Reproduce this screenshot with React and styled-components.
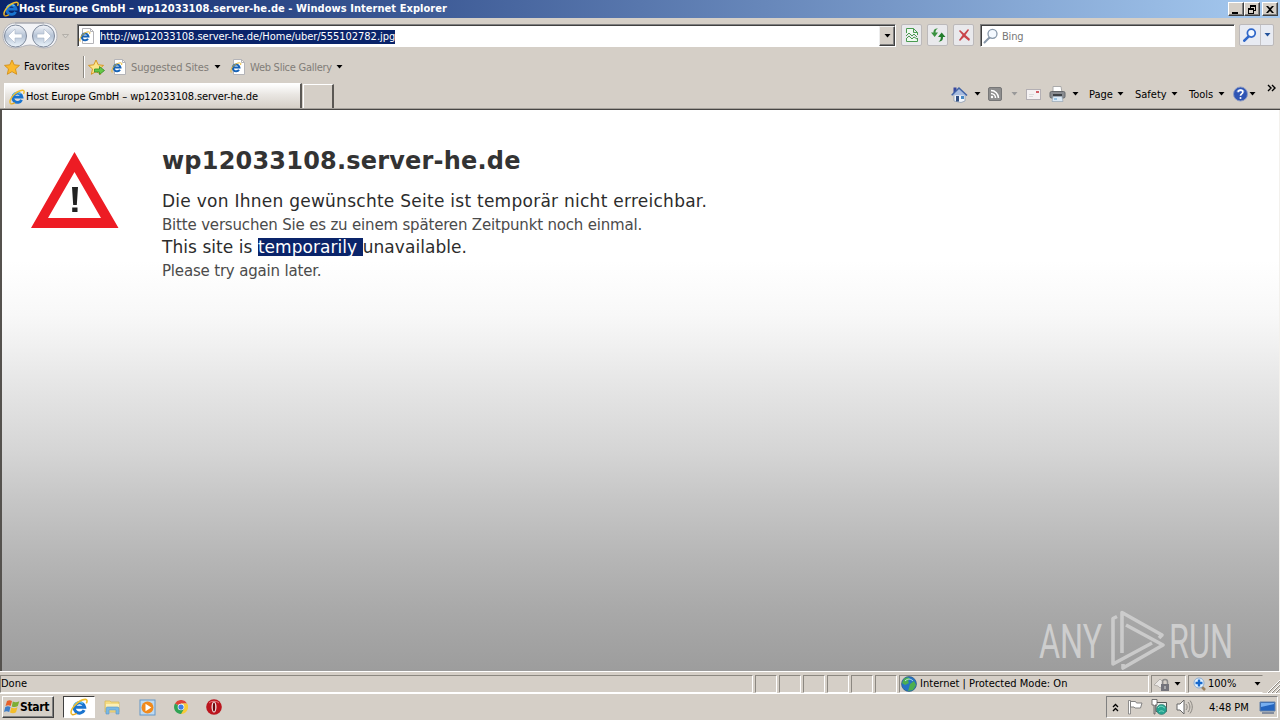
import React from "react"
import styled, { createGlobalStyle } from "styled-components"

const face = "#d5cfc7"
const ui = `"DejaVu Sans Condensed", "DejaVu Sans", Tahoma, sans-serif`

function App() {
  return (
    <Desktop>
      <GlobalStyle />
      <TitleBar>
        <IeLogo size={16} />
        <TitleText $ls={0.055}>
          Host Europe GmbH – wp12033108.server-he.de - Windows Internet Explorer
        </TitleText>
        <WindowButton>
          <path d="M3 9h6v2H3z" />
        </WindowButton>
        <WindowButton>
          <path d="M5 2h6v6H9V7h1V4H6v1H5zM3 5h6v6H3zM4 7v3h4V7z" fillRule="evenodd" />
        </WindowButton>
        <WindowButton gap>
          <path d="M3 3h2l2 2 2-2h2L8 6.500l3 3.500H9L7 8l-2 2H3l3-3.500z" />
        </WindowButton>
      </TitleBar>
      <NavRow>
        <NavArrows />
        <AddressBox>
          <PageIcon />
          <Url>http://wp12033108.server-he.de/Home/uber/555102782.jpg</Url>
          <ComboButton>
            <Arrow />
          </ComboButton>
        </AddressBox>
        <ToolButtons>
          <ToolButton>
            <svg width="14" height="16" viewBox="0 0 14 16" fill="none" stroke="#4a9b50">
              <path d="M1.500 6V1.500h7l4 4V8M8.500 1.500v4h4M1.500 11v3.500h11V11" fill="#effaf0" />
              <path d="M1 9l3-3 3 3 2-2 3 3M1 12l3-3 3 3 2-2 3 2" />
            </svg>
          </ToolButton>
          <ToolButton>
            <svg width="16" height="14" viewBox="0 0 16 14">
              <path d="M8 .5C4.500.5 3.500 2 3.500 4.500H1L4.700 9 8 4.500H5.500C5.500 2.500 6 1.500 8 .5z" fill="#3a9140" />
              <path d="M8.500 13.500c3.500 0 4.500-1.500 4.500-4.500h2.500L11.700 4.500 8 9h2.800c0 2-.5 3.500-2.300 4.500z" fill="#237d2c" />
            </svg>
          </ToolButton>
          <ToolButton>
            <svg width="14" height="14" viewBox="0 0 14 14">
              <path d="M2 3l1-1 4 3.500L11 1l1 1-3.500 5L13 11l-1 2-5-4-4 4-1-1 3.500-5z" fill="#c9444a" />
            </svg>
          </ToolButton>
        </ToolButtons>
        <SearchBox>
          <Magnifier color="#8898aa" />
          <Bing $color="#777" $ls={-0.2}>Bing</Bing>
        </SearchBox>
        <SearchSplit>
          <SearchCell $w={20}>
            <Magnifier color="#2f67c9" small />
          </SearchCell>
          <SearchCell $w={13}>
            <Arrow color="#24549c" />
          </SearchCell>
        </SearchSplit>
      </NavRow>
      <FavoritesRow>
        <Star />
        <FavLabel $w={59} $ls={0.1}>Favorites</FavLabel>
        <Divider />
        <Star add />
        <FavItem $ml={6}>
          <PageIcon />
          <Text $w={83} $color="#817d78" $ls={-0.15}>Suggested Sites</Text>
          <Arrow />
        </FavItem>
        <FavItem $ml={9}>
          <PageIcon />
          <Text $w={86} $color="#817d78" $ls={-0.26}>Web Slice Gallery</Text>
          <Arrow />
        </FavItem>
      </FavoritesRow>
      <TabRow>
        <Tab>
          <IeLogo size={16} />
          <TabText $ls={-0.09}>Host Europe GmbH – wp12033108.server-he.de</TabText>
        </Tab>
        <NewTab />
        <CommandBar>
          <CommandItem $w={37}>
            <HomeIcon />
            <Arrow />
          </CommandItem>
          <CommandItem $w={38}>
            <RssIcon />
            <Arrow color="#999" />
          </CommandItem>
          <CommandItem $w={23}>
            <MailIcon />
          </CommandItem>
          <CommandItem $w={40}>
            <PrinterIcon />
            <Arrow />
          </CommandItem>
          <CommandItem $w={46}>
            <Text $w={28}>Page</Text>
            <Arrow />
          </CommandItem>
          <CommandItem $w={54}>
            <Text $w={36}>Safety</Text>
            <Arrow />
          </CommandItem>
          <CommandItem $w={44}>
            <Text $w={29}>Tools</Text>
            <Arrow />
          </CommandItem>
          <CommandItem $w={34}>
            <HelpIcon />
            <Arrow />
          </CommandItem>
          <Chevrons width="9" height="8" viewBox="0 0 9 8">
            <path d="M1 1l3 3-3 3M5 1l3 3-3 3" fill="none" stroke="#000" strokeWidth="1.400" />
          </Chevrons>
        </CommandBar>
      </TabRow>
      <Page>
        <Warning />
        <Message>
          <Heading>wp12033108.server-he.de</Heading>
          <Strong $ls={0.26}>Die von Ihnen gewünschte Seite ist temporär nicht erreichbar.</Strong>
          <Line>Bitte versuchen Sie es zu einem späteren Zeitpunkt noch einmal.</Line>
          <Strong $ls={0.05}>
            This site is <Selected>temporarily </Selected>unavailable.
          </Strong>
          <Line>Please try again later.</Line>
        </Message>
        <Watermark />
      </Page>
      <StatusBar>
        <Panel $w={753}>
          <Text>Done</Text>
        </Panel>
        {[0, 1, 2, 3, 4, 5].map(i => (
          <Panel key={i} $w={22} />
        ))}
        <Panel $w={250}>
          <Globe />
          <Text $ls={0.02}>Internet | Protected Mode: On</Text>
        </Panel>
        <Panel $w={35}>
          <LockIcon />
          <Arrow />
        </Panel>
        <Panel $w={75} $open>
          <ZoomIcon />
          <ZoomText $w={43}>100%</ZoomText>
          <Arrow />
        </Panel>
        <Grip width="14" height="14" viewBox="0 0 14 14">
          <path d="M1 14L14 1M5 14l9-9M9 14l5-5" stroke="#fff" />
          <path d="M2 14L14 2M6 14l8-8M10 14l4-4" stroke="#8c8881" />
        </Grip>
      </StatusBar>
      <Taskbar>
        <StartButton>
          <WindowsFlag />
          <StartText>Start</StartText>
        </StartButton>
        <ActiveTask>
          <IeLogo size={18} />
        </ActiveTask>
        <Launchers>
          <FolderIcon />
          <PlayerIcon />
          <ChromeIcon />
          <OperaIcon />
        </Launchers>
        <Tray>
          <svg width="7" height="9" viewBox="0 0 7 9">
            <path d="M1 4l2.500-2.500L6 4M1 8l2.500-2.500L6 8" fill="none" stroke="#000" strokeWidth="1.300" />
          </svg>
          <TrayFlag />
          <NetworkIcon />
          <SpeakerIcon />
          <Clock>4:48 PM</Clock>
          <MonitorIcon />
        </Tray>
      </Taskbar>
    </Desktop>
  )
}

export default App

function Arrow({ color = "#000" }) {
  return (
    <svg width="7" height="4" viewBox="0 0 7 4">
      <path d="M.5 0h6l-3 3.500z" fill={color} />
    </svg>
  )
}

function WindowButton({ gap, children }) {
  return (
    <WinButton $gap={gap}>
      <svg width="14" height="12" viewBox="0 0 14 12">
        {children}
      </svg>
    </WinButton>
  )
}

function IeLogo({ size = 16 }) {
  return (
    <svg width={size} height={size} viewBox="0 0 16 16" fill="none">
      <path d="M12.600 10.800A4.600 4.600 0 1 1 13 8.200H5" stroke="#1a74cf" strokeWidth="2.800" />
      <path d="M3.800 6.500A4.800 4.800 0 0 1 11.500 4.800" stroke="#58bdf2" strokeWidth="1.600" />
      <path d="M1.500 14.500C-1 11 7 1.500 13.500 1.200c2-.1 2 1.800 1 3.600" stroke="#f0bd2c" strokeWidth="1.400" />
      <path d="M1.500 14.500c1 .9 3 0 4.500-.8" stroke="#e5a91c" strokeWidth="1.200" />
    </svg>
  )
}

function PageIcon() {
  return (
    <svg width="16" height="16" viewBox="0 0 16 16" fill="none">
      <path d="M3.500.5h8l3 3v12h-11z" fill="#fff" stroke="#b4b4b8" />
      <path d="M11.500.5v3h3" stroke="#b4b4b8" />
      <path d="M9 10.700A3.400 3.400 0 1 1 9.500 8.600H3.500" stroke="#1763b6" strokeWidth="2" />
      <path d="M1.200 13.500C-.5 10.500 4.500 4 9.500 3.800c1.500 0 1.500 1 1 2.200" stroke="#e8b52a" />
    </svg>
  )
}

function NavArrows() {
  return (
    <svg width="74" height="30" viewBox="0 0 74 30">
      <defs>
        <linearGradient id="orb" x1="0" y1="0" x2="0" y2="1">
          <stop offset="0" stopColor="#f4f6fa" />
          <stop offset=".5" stopColor="#b5c3d6" />
          <stop offset="1" stopColor="#eef6fc" />
        </linearGradient>
      </defs>
      <path d="M15 2h29c8 0 13 5 13 13 0 7-5 12-13 12-6 0-8-3-14-3s-9 3-15 3C8 27 3 22 3 15S8 2 15 2z" fill="#f3f4f7" stroke="#b4b5bb" />
      <path d="M15 2h29" stroke="#a3a5ad" />
      <circle cx="15.500" cy="15" r="11" fill="url(#orb)" stroke="#7e899b" />
      <circle cx="43.500" cy="15" r="11" fill="url(#orb)" stroke="#7e899b" />
      <path d="M8 15l7-7v5h7v4h-7v5z" fill="#fff" stroke="#a9b6c8" strokeWidth=".6" />
      <path d="M51 15l-7-7v5h-7v4h7v5z" fill="#fff" stroke="#a9b6c8" strokeWidth=".6" />
      <path d="M62.500 13.500h6l-3 3.500z" fill="#d9d6d0" stroke="#aaa69f" strokeWidth=".8" />
    </svg>
  )
}

function Magnifier({ color, small }) {
  const size = small ? 14 : 16
  return (
    <svg width={size} height={size} viewBox="0 0 16 16">
      <path d="M6.500 9.500l-5 5" stroke={color} strokeWidth={small ? 3 : 2} strokeLinecap="round" />
      <circle cx="9.500" cy="5.800" r="4.500" fill="#f4f9ff" stroke={color} strokeWidth={small ? 2 : 1.3} />
    </svg>
  )
}

function Star({ add }) {
  return (
    <svg width="17" height="17" viewBox="0 0 17 17">
      <path
        d="M8 1l2.200 4.800 5.300.6-4 3.500 1.200 5.400L8 12.600l-4.700 2.700 1.200-5.400-4-3.500 5.300-.6z"
        fill={add ? "#fbe488" : "#fcb92c"}
        stroke="#d39019"
        strokeWidth=".9"
      />
      {add && <path d="M6.500 10h5V7.500l5 4-5 4V13h-5z" fill="#64c846" stroke="#338a25" strokeWidth=".8" />}
    </svg>
  )
}

function HomeIcon() {
  return (
    <svg width="17" height="17" viewBox="0 0 17 17">
      <path d="M3 8h11v7l-4 1.500L3 15z" fill="#f3f6fb" stroke="#8797ae" strokeWidth=".7" />
      <path d="M2.500 1.500h3V5l-3 2z" fill="#38479e" />
      <path d="M.7 9.300L8 2l8 7.500" fill="#a9bddf" stroke="#3f62a6" strokeWidth="1.500" />
      <path d="M5 10h3v5.500H5z" fill="#304f82" />
      <path d="M10 10h3v3h-3z" fill="#4689c5" />
    </svg>
  )
}

function RssIcon() {
  return (
    <svg width="14" height="14" viewBox="0 0 14 14">
      <rect x=".5" y=".5" width="13" height="13" rx="1.500" fill="#8e8e8e" stroke="#777" />
      <path d="M3 3.500A7.500 7.500 0 0 1 10.500 11M3 6.500A4.500 4.500 0 0 1 7.500 11" fill="none" stroke="#fff" strokeWidth="1.500" />
      <circle cx="4" cy="10" r="1.200" fill="#fff" />
    </svg>
  )
}

function MailIcon() {
  return (
    <svg width="15" height="11" viewBox="0 0 15 11">
      <rect x=".5" y=".5" width="14" height="10" fill="#f5f2f3" stroke="#b3afb3" />
      <path d="M3 5.500h5M3 7.500h4" stroke="#dadada" />
      <path d="M10 2h3v2h-3z" fill="#d15e66" />
    </svg>
  )
}

function PrinterIcon() {
  return (
    <svg width="17" height="16" viewBox="0 0 17 16">
      <path d="M4 .5h8l1 6H4z" fill="#fff" stroke="#aaa" />
      <rect x="1" y="5.500" width="15" height="6.500" rx="1.500" fill="#898c91" stroke="#65686c" />
      <path d="M4 8h9v2H4z" fill="#3d4146" />
      <path d="M4 10.500h9l1 5H3z" fill="#dceaf6" stroke="#98a6b5" strokeWidth=".7" />
      <path d="M5 13h3" stroke="#549ad0" />
    </svg>
  )
}

function HelpIcon() {
  return (
    <svg width="15" height="16" viewBox="0 0 15 16">
      <circle cx="7.500" cy="8" r="7" fill="#2f55b4" stroke="#8b9ac4" />
      <path d="M3 5.500a5 4 0 0 1 9 0" fill="#7195dc" />
      <path d="M5.200 6.200c.2-3 5-2.600 4.600.1C9.500 8 7.500 7.800 7.500 9.800" fill="none" stroke="#fff" strokeWidth="1.700" />
      <circle cx="7.500" cy="12" r="1" fill="#fff" />
    </svg>
  )
}

function Warning() {
  return (
    <WarningSvg width="88" height="77" viewBox="0 0 88 77">
      <path d="M43.500 0L87.500 76H0zM43.500 20L17 66h53z" fill="#ed1c24" fillRule="evenodd" />
      <path d="M41 35h6l-1.200 18h-3.600zM41.200 55.500h5.300v4.500h-5.300z" fill="#222" />
    </WarningSvg>
  )
}

function Watermark() {
  return (
    <WatermarkSvg width="200" height="66" viewBox="0 0 200 66">
      <g fill="#dcdcdc" fontFamily="Roboto, sans-serif" fontSize="49">
        <text transform="translate(2 51) scale(.66 1)">ANY</text>
        <text transform="translate(132 51) scale(.66 1)">RUN</text>
      </g>
      <g fill="none" stroke="#d8d8d8" strokeWidth="3.600" strokeLinejoin="round">
        <path d="M80 9.500l-4 2V57l39-21" />
        <path d="M85 46V5.500l40 22.500-3 3" />
        <path d="M89 18l37 20-40 23v-4" />
      </g>
    </WatermarkSvg>
  )
}

function Globe() {
  return (
    <svg width="16" height="16" viewBox="0 0 16 16">
      <circle cx="8" cy="8" r="7.500" fill="#2673c4" stroke="#245374" strokeWidth=".6" />
      <path d="M3 3c2-2 5-2 6 0L7 5l1 2-4 2-3-2zM9 8l4-3 2 4-3 5-5 1 1-3z" fill="#4caf50" />
      <path d="M4 5c3-3 6-2 8 0" fill="none" stroke="#b9e6ef" />
    </svg>
  )
}

function LockIcon() {
  return (
    <svg width="18" height="16" viewBox="0 0 18 16">
      <path d="M1 9l6-6 3 3v4l-3 2-2-2z" fill="#ece9e6" stroke="#aaa6a1" strokeWidth=".8" />
      <path d="M9.500 8V6a2.500 2.500 0 0 1 5 0v2" fill="none" stroke="#8b8b8b" strokeWidth="1.500" />
      <rect x="8" y="8" width="8" height="7" fill="#74747b" />
      <path d="M12 10v3" stroke="#ddd" />
    </svg>
  )
}

function ZoomIcon() {
  return (
    <ZoomSvg width="14" height="15" viewBox="0 0 14 15">
      <path d="M8 9l4 4" stroke="#9b805d" strokeWidth="2.500" />
      <circle cx="6" cy="6" r="5" fill="#e8f5ff" stroke="#8aacd3" />
      <path d="M6 2.500v7M2.500 6h7" stroke="#1769cd" strokeWidth="2.400" />
    </ZoomSvg>
  )
}

function WindowsFlag() {
  return (
    <svg width="16" height="16" viewBox="0 0 16 16">
      <path d="M3 2c2-1.300 3.500-1 5 0L6.700 7C5 6 3.500 6 1.500 7z" fill="#e6602b" />
      <path d="M8.800 2.500c2 1 4 1 6.500-.3L13.800 7c-2 1.300-4 1.300-6 .4z" fill="#7dae35" />
      <path d="M1.300 8c2-1.200 3.500-1 5.200 0L5.200 13c-2-1-3.500-1-5.200 0z" fill="#3e7dc8" />
      <path d="M7.300 8.500c2 1 4 1 6.200-.2L12 13.300c-2 1.300-4 1.200-6 .2z" fill="#f3bd2b" />
    </svg>
  )
}

function FolderIcon() {
  return (
    <svg width="17" height="16" viewBox="0 0 17 16">
      <path d="M1 2h5l1 1h8v10H1z" fill="#f4dc84" stroke="#d5b653" strokeWidth=".7" />
      <path d="M2 5h13v3H2z" fill="#fbefb6" />
      <path d="M2 15V9.500C2 8 3 8 4 8h9c1.500 0 2 .5 2 2v5h-3v-4H5v4z" fill="#79b9e4" stroke="#5b96c8" strokeWidth=".6" />
    </svg>
  )
}

function PlayerIcon() {
  return (
    <svg width="17" height="17" viewBox="0 0 17 17">
      <rect x="1" y="1" width="15" height="15" fill="#bedaf1" stroke="#6497c8" />
      <circle cx="8.500" cy="8.500" r="6" fill="#f18a1c" />
      <path d="M6.500 4.700v7.600l5.800-3.800z" fill="#fff" />
    </svg>
  )
}

function ChromeIcon() {
  return (
    <svg width="14" height="14" viewBox="0 0 16 16">
      <path d="M8 8L1.100 4A8 8 0 0 1 15 4H8z" fill="#df4437" />
      <path d="M8 8V4h7a8 8 0 0 1-7 12z" fill="#f7cb38" />
      <path d="M8 8l3.500 2L8 16A8 8 0 0 1 1.100 4z" fill="#30a354" />
      <circle cx="8" cy="8" r="3.800" fill="#fff" />
      <circle cx="8" cy="8" r="3" fill="#3f7fe4" />
    </svg>
  )
}

function OperaIcon() {
  return (
    <svg width="16" height="16" viewBox="0 0 16 16">
      <circle cx="8" cy="8" r="7.800" fill="#bb151e" />
      <path d="M3 4a6 4 0 0 1 10 0" fill="none" stroke="#e27478" />
      <ellipse cx="8" cy="8" rx="2.500" ry="5.500" fill="#f3e7e7" />
      <ellipse cx="8" cy="8" rx="1.200" ry="4.600" fill="#6d080e" />
    </svg>
  )
}

function TrayFlag() {
  return (
    <svg width="16" height="16" viewBox="0 0 16 16">
      <path d="M1.500 1.500h2V15h-2z" fill="#fff" stroke="#777" strokeWidth=".8" />
      <path d="M3.500 2.500h5l1 1.500H15l-1.500 5H8l-1-1H3.500z" fill="#fff" stroke="#777" strokeWidth=".9" />
    </svg>
  )
}

function NetworkIcon() {
  return (
    <svg width="17" height="17" viewBox="0 0 17 17">
      <path d="M5 3.500h10.500v9H5z" fill="#eaf0ed" stroke="#555" />
      <path d="M1 .5h5V6H4v9H3V6H1z" fill="#fff" stroke="#555" strokeWidth=".8" />
      <circle cx="10.500" cy="10.500" r="5" fill="#24a390" stroke="#397d74" strokeWidth=".7" />
      <path d="M7 9c3-4 6 0 7 0M8 13c2-2 4-1 5 0" fill="none" stroke="#83dec6" />
    </svg>
  )
}

function SpeakerIcon() {
  return (
    <svg width="17" height="16" viewBox="0 0 17 16" fill="none">
      <path d="M1 5h3l4-4v14l-4-4H1z" fill="#fff" stroke="#666" />
      <path d="M10 5c1.500 2 1.500 4 0 6M12 3c2.500 3 2.500 7 0 10M14 1.500c3 4 3 9 0 13" stroke="#898681" />
    </svg>
  )
}

function MonitorIcon() {
  return (
    <svg width="17" height="13" viewBox="0 0 17 13">
      <path d="M1 1h15v9H1z" fill="#2465bf" stroke="#6581a6" />
      <path d="M2 2h13v1L2 6z" fill="#77aff0" />
      <path d="M3 12h12" stroke="#344d77" />
    </svg>
  )
}

const GlobalStyle = createGlobalStyle`
  * {
    box-sizing: border-box;
  }
  body {
    margin: 0;
    overflow: hidden;
  }
  svg {
    display: block;
    flex: none;
  }
`

const Desktop = styled.div`
  width: 1280px;
  height: 720px;
  display: flex;
  flex-direction: column;
  background: ${face};
  font-family: ${ui};
  font-size: 11px;
  color: #000;
`

const Text = styled.span`
  flex: none;
  width: ${p => (p.$w ? `${p.$w}px` : "auto")};
  color: ${p => p.$color || "#000"};
  letter-spacing: ${p => p.$ls || 0}px;
  line-height: 14px;
  white-space: nowrap;
`

const TitleBar = styled.div`
  height: 18px;
  padding: 0 2px 0 3px;
  display: flex;
  align-items: center;
  background: linear-gradient(90deg, #0a246a 0%, #a6caf0 100%);
`

const TitleText = styled(Text)`
  flex: 1;
  color: #fff;
  font-weight: bold;
`

const WinButton = styled.div`
  width: 16px;
  height: 14px;
  margin-left: ${p => (p.$gap ? 2 : 0)}px;
  background: ${face};
  border: 1px solid;
  border-color: #fff #404040 #404040 #fff;
  box-shadow: inset -1px -1px #808080;
`

const NavRow = styled.div`
  height: 36px;
  padding: 3px 5px 0 0;
  display: flex;
  align-items: flex-start;
`

const AddressBox = styled.div`
  width: 819px;
  height: 23px;
  margin: 3px 6px 0 3px;
  padding: 0 0 0 1px;
  display: flex;
  align-items: center;
  background: #fff;
  border: 1px solid;
  border-color: #808080 #fff #fff #808080;
  box-shadow: inset 1px 1px #404040;
`

const Url = styled.span`
  margin: 2px auto 0 5px;
  color: #fff;
  background: #0a246a;
  letter-spacing: -0.04px;
  line-height: 14px;
`

const ComboButton = styled.div`
  width: 16px;
  height: 20px;
  display: grid;
  place-items: center;
  background: ${face};
  border: 1px solid;
  border-color: #eee #404040 #404040 #eee;
  box-shadow: inset -1px -1px #808080;
`

const ToolButtons = styled.div`
  flex: none;
  display: flex;
  gap: 5px;
  margin: 3px 0 0 -1px;
`

const ToolButton = styled.div`
  width: 21px;
  height: 22px;
  display: grid;
  place-items: center;
  background: #e9e9ec;
  border: 1px solid #bcb9ba;
  border-radius: 2px;
`

const SearchBox = styled.div`
  width: 255px;
  height: 23px;
  margin: 3px 4px 0 6px;
  padding-left: 2px;
  display: flex;
  align-items: center;
  gap: 3px;
  background: #fff;
  border: 1px solid;
  border-color: #808080 #fff #fff #808080;
  box-shadow: inset 1px 1px #404040;
`

const Bing = styled(Text)`
  padding-top: 2px;
`

const SearchSplit = styled.div`
  display: flex;
  margin-top: 3px;
  border: 1px solid #bcb9ba;
  border-radius: 2px;
  background: #e8ebf2;
`

const SearchCell = styled.div`
  width: ${p => p.$w}px;
  height: 20px;
  display: grid;
  place-items: center;

  & + & {
    border-left: 1px solid #c4c3c6;
  }
`

const FavoritesRow = styled.div`
  height: 26px;
  padding-left: 4px;
  display: flex;
  align-items: center;
`

const FavLabel = styled(Text)`
  margin-left: 3px;
`

const Divider = styled.div`
  width: 2px;
  height: 22px;
  margin-right: 3px;
  border-left: 1px solid #8c8881;
  border-right: 1px solid #fff;
`

const FavItem = styled.div`
  margin-left: ${p => p.$ml}px;
  display: flex;
  align-items: center;

  ${Text} {
    margin-left: 4px;
    padding-top: 1px;
  }
`

const TabRow = styled.div`
  height: 30px;
  padding: 3px 4px 0 4px;
  display: flex;
  align-items: flex-start;
  border-bottom: 1px solid #484644;
  box-shadow: inset 0 -1px #a5a19b;
`

const Tab = styled.div`
  width: 298px;
  height: 25px;
  padding: 1px 0 0 4px;
  display: flex;
  align-items: center;
  background: linear-gradient(180deg, #fff 0%, #e9e6e2 45%, ${face} 100%);
  border-top: 1px solid #fff;
  border-left: 1px solid #fff;
  border-right: 2px solid #5b5854;
`

const TabText = styled(Text)`
  margin-left: 1px;
`

const NewTab = styled.div`
  width: 31px;
  height: 24px;
  margin: 1px 0 0 1px;
  border-top: 1px solid #fff;
  border-left: 1px solid #fff;
  border-right: 2px solid #5b5854;
`

const CommandBar = styled.div`
  margin-left: auto;
  height: 22px;
  display: flex;
  align-items: center;
`

const CommandItem = styled.div`
  width: ${p => p.$w}px;
  display: flex;
  align-items: center;

  > ${Text} {
    padding-top: 1px;
  }
  > svg + svg {
    margin-left: 6px;
  }
  &:nth-child(8) > svg + svg {
    margin-left: 1px;
  }
  &:nth-child(2) > svg + svg {
    margin-left: 9px;
  }
`

const Chevrons = styled.svg`
  align-self: flex-start;
  margin-top: 1px;
`

const Page = styled.div`
  flex: none;
  position: relative;
  height: 561px;
  padding: 42px 0 0 29px;
  display: flex;
  align-items: flex-start;
  background: linear-gradient(
    180deg,
    #fff 150px,
    #fcfcfc 175px,
    #f8f8f8 205px,
    #f0f0f0 237px,
    #e7e7e7 270px,
    #d5d5d5 342px,
    #c6c6c6 390px,
    #b6b6b6 447px,
    #a9a9a9 500px,
    #9d9d9d 560px
  );
  border-left: 2px solid #55524e;
  border-right: 1px solid #f3f1ed;
`

const WarningSvg = styled.svg`
  margin-right: 43px;
`

const Message = styled.div`
  font-family: "DejaVu Sans", Verdana, sans-serif;
  color: #333;
  white-space: nowrap;
`

const Heading = styled.h1`
  margin: -7px 0 13px;
  font-size: 24px;
  line-height: 32px;
  font-weight: bold;
  letter-spacing: 0.2px;
`

const Strong = styled.div`
  font-size: 17px;
  line-height: 23px;
  letter-spacing: ${p => p.$ls}px;
  color: #2c2c2c;
`

const Line = styled.div`
  height: 23px;
  font-size: 15px;
  line-height: 25px;
  letter-spacing: -0.18px;
  color: #4b4b4b;
`

const Selected = styled.span`
  display: inline-block;
  color: #fff;
  background: #0a246a;
  line-height: 18px;
  white-space: pre;
`

const WatermarkSvg = styled.svg`
  position: absolute;
  right: 42px;
  bottom: -2px;
  opacity: 0.75;
`

const StatusBar = styled.div`
  height: 23px;
  padding-top: 3px;
  display: flex;
  gap: 2px;
  background: ${face};
  border-top: 1px solid #fff;
  border-bottom: 1px solid #fff;
`

const Panel = styled.div`
  flex: none;
  width: ${p => p.$w}px;
  height: 18px;
  padding-left: 1px;
  display: flex;
  align-items: center;
  gap: 3px;
  border: 1px solid;
  border-color: #8c8881 ${p => (p.$open ? "transparent" : "#fff")} #fff #8c8881;

  &:first-child {
    padding-left: 0;
  }
`

const ZoomSvg = styled.svg`
  margin-left: 3px;
`

const ZoomText = styled(Text)`
  margin-left: -2px;
`

const Grip = styled.svg`
  margin: 4px 0 0 auto;
`

const Taskbar = styled.div`
  flex: 1;
  padding: 2px 2px 2px 2px;
  display: flex;
  align-items: flex-start;
`

const StartButton = styled.div`
  width: 52px;
  height: 22px;
  padding-left: 1px;
  display: flex;
  align-items: center;
  border: 1px solid;
  border-color: #fff #404040 #404040 #fff;
  box-shadow: inset -1px -1px #808080;
`

const StartText = styled(Text)`
  font-size: 12px;
  font-weight: bold;
  letter-spacing: -0.3px;
`

const ActiveTask = styled.div`
  width: 32px;
  height: 22px;
  margin-left: 9px;
  display: grid;
  place-items: center;
  background: #fff;
  border: 1px solid;
  border-color: #404040 #fff #fff #404040;
`

const Launchers = styled.div`
  height: 22px;
  margin-left: 9px;
  display: flex;
  align-items: center;
  gap: 18px;
`

const Tray = styled.div`
  width: 172px;
  height: 22px;
  margin-left: auto;
  padding-left: 5px;
  display: flex;
  align-items: center;
  gap: 8px;
  border: 1px solid;
  border-color: #808080 #fff #fff #808080;
`

const Clock = styled(Text)`
  width: 42px;
  margin-left: 8px;
  padding-top: 1px;
`
